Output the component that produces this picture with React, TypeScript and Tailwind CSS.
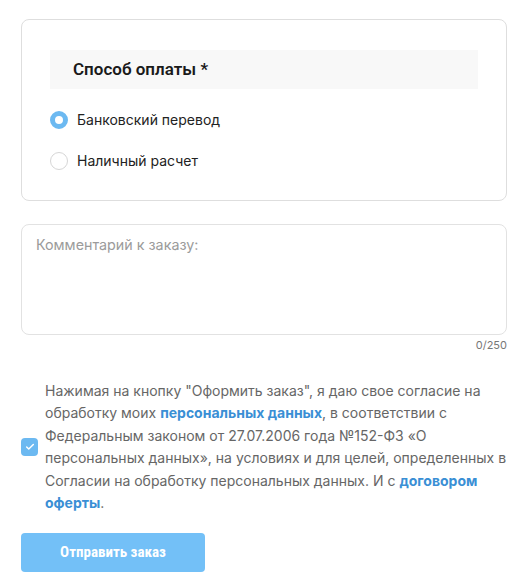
import { Check } from 'lucide-react'

const RadioOption = ({ label, checked }: { label: string; checked?: boolean }) => (
  <label className="flex h-[41px] items-center gap-[9px]">
    {checked ? (
      <span className="h-[18px] w-[18px] rounded-full border-[5px] border-[#6cb9f1] bg-white" />
    ) : (
      <span className="h-[18px] w-[18px] rounded-full border border-[#d6d6d6] bg-white" />
    )}
    <span className="text-[14px] text-[#222]">{label}</span>
  </label>
)

export default function App() {
  return (
    <div className="min-h-[586px] bg-white pt-[19px] pl-[21px] pr-[24px] font-['Inter',sans-serif]">
      <div className="rounded-lg border border-[#dedede] px-[28px] pt-[30px] pb-[19px]">
        <div className="flex h-[39px] items-center bg-[#f8f8f8] pl-[23px]">
          <span className="font-['Roboto',sans-serif] text-[17px] font-semibold text-[#1a1a1a]">
            Способ оплаты *
          </span>
        </div>
        <div className="mt-[10px] flex flex-col">
          <RadioOption label="Банковский перевод" checked />
          <RadioOption label="Наличный расчет" />
        </div>
      </div>

      <div className="mt-[23px] h-[111px] rounded-lg border border-[#e2e2e2] px-[14px] pt-[7px]">
        <span className="text-[14.3px] text-[#9b9b9b]">Комментарий к заказу:</span>
      </div>
      <div className="mt-[2px] text-right text-[11px] text-[#777]">0/250</div>

      <div className="mt-[26px] mr-[-14px] flex items-center gap-[7px]">
        <span className="flex h-[18px] w-[17px] shrink-0 items-center justify-center rounded-[4px] bg-[#6cb9f1]">
          <Check className="h-[10px] w-[10px] text-white" strokeWidth={3.5} />
        </span>
        <p className="text-[14px] leading-[22.5px] text-[#666]">
          Нажимая на кнопку "Оформить заказ", я даю свое согласие на обработку моих{' '}
          <a className="font-bold text-[#3a8fd5]">персональных данных</a>, в соответствии с
          Федеральным законом от 27.07.2006 года №152-ФЗ «О персональных данных», на условиях и для
          целей, определенных в Согласии на обработку персональных данных. И с{' '}
          <a className="font-bold text-[#3a8fd5]">договором оферты</a>.
        </p>
      </div>

      <button
        type="button"
        className="mt-[18px] h-[39px] w-[184px] rounded-[4px] bg-[#73c0f7] font-['Roboto_Condensed','Liberation_Sans_Narrow','DejaVu_Sans_Condensed',sans-serif] text-[15px] font-bold text-white"
      >
        Отправить заказ
      </button>
    </div>
  )
}
